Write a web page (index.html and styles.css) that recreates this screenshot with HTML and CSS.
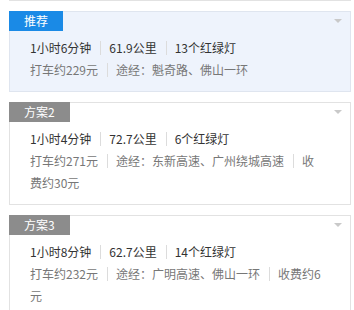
FILE: index.html
```html
<html><head>
    <title>驾车方案</title>
    <link rel="stylesheet" href="styles.css">
</head>
<body>
    <div class="plan-list">
        <div class="plan-prev"></div>

        <div class="plan plan-active">
            <div class="plan-tag tag-blue">推荐</div>
            <span class="arrow"></span>
            <div class="plan-body">
                <p class="plan-main">1小时6分钟<span class="sep"></span>61.9公里<span class="sep"></span>13个红绿灯</p>
                <p class="plan-sub">打车约229元<span class="sep"></span>途经：魁奇路、佛山一环</p>
            </div>
        </div>

        <div class="plan">
            <div class="plan-tag">方案2</div>
            <span class="arrow"></span>
            <div class="plan-body">
                <p class="plan-main">1小时4分钟<span class="sep"></span>72.7公里<span class="sep"></span>6个红绿灯</p>
                <p class="plan-sub">打车约271元<span class="sep"></span>途经：东新高速、广州绕城高速<span class="sep"></span>收费约30元</p>
            </div>
        </div>

        <div class="plan">
            <div class="plan-tag">方案3</div>
            <span class="arrow"></span>
            <div class="plan-body">
                <p class="plan-main">1小时8分钟<span class="sep"></span>62.7公里<span class="sep"></span>14个红绿灯</p>
                <p class="plan-sub">打车约232元<span class="sep"></span>途经：广明高速、佛山一环<span class="sep"></span>收费约6元</p>
            </div>
        </div>
    </div>
</body></html>
```

FILE: styles.css
```css
body {margin: 0; background: #fff; font-family: "Microsoft YaHei", "Noto Sans CJK SC", sans-serif; font-size: 12px;}
.plan-list {padding: 0 3px 0 9px;}
.plan-prev {border-bottom: 1px solid #e2e2e2; margin-bottom: 10px;}
.plan {position: relative; border: 1px solid #e2e2e2; background: #fff; margin-bottom: 10px;}
.plan-active {background: #eef3fc; border-color: #dfe5ef;}
.plan-tag {display: inline-block; margin: -1px 0 0 -1px; padding: 0 15px; height: 20px; line-height: 20px; background: #8c8c8c; color: #fff; font-size: 12px;}
.tag-blue {background: #1a8ae6;}
.arrow {position: absolute; top: 7px; right: 8px; width: 0; height: 0; border-left: 4px solid transparent; border-right: 4px solid transparent; border-top: 4px solid #c9c9c9;}
.plan-body {padding: 6px 27px 10px 20px;}
.plan-body p {margin: 0; line-height: 22px;}
.plan-main {color: #333;}
.plan-sub {color: #777;}
.sep {display: inline-block; width: 0; height: 14px; border-left: 1px solid #dcdcdc; margin: 0 8px 0 9px; vertical-align: -2px;}
```
